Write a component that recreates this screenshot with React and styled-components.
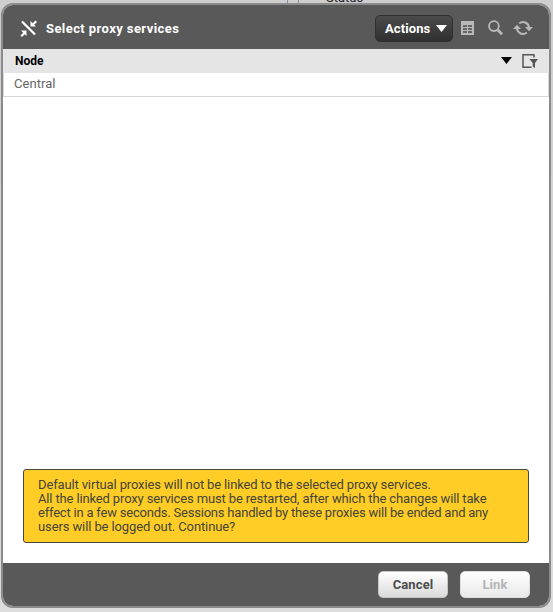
import React from "react";
import styled, { createGlobalStyle } from "styled-components";

const GlobalStyle = createGlobalStyle`
  * { box-sizing: border-box; }
  html, body { margin: 0; height: 100%; overflow: hidden; background: #d6d6d6; }
  body { font-family: Roboto, "Liberation Sans", sans-serif; font-size: 13px; }
`;

const Page = styled.div`
  position: relative;
  width: 553px;
  height: 612px;
  padding: 3px 2px 4px 1px;
  overflow: hidden;
  background: linear-gradient(#cecece, #dcdcdc);
`;

const Behind = styled.div`
  position: absolute;
  top: -10px;
  left: 287px;
  height: 15px;
  width: 90px;
  display: flex;
  line-height: 15px;
  color: #222;
`;

const Divider = styled.i`
  width: 1px;
  margin-right: 10px;
  background: #8095a8;
`;

const BehindLabel = styled.span`
  margin-left: 17px;
`;

const Dialog = styled.section`
  position: relative;
  display: flex;
  flex-direction: column;
  height: 605px;
  border: 2px solid #8b8b8b;
  border-radius: 12px;
  overflow: hidden;
  background: #fff;
`;

const Header = styled.header`
  display: flex;
  align-items: center;
  flex: 0 0 44px;
  padding: 2px 16px 0 17px;
  background: #595959;
  color: #b9b9b9;
`;

const Title = styled.h1`
  flex: 1;
  margin: 1px 0 0 9px;
  font-size: 13px;
  line-height: 18px;
  font-weight: 700;
  letter-spacing: 0.42px;
  color: #fff;
`;

const ActionsButton = styled.button`
  display: flex;
  align-items: center;
  justify-content: space-between;
  width: 78px;
  height: 27px;
  margin-right: 8px;
  padding: 0 5px 0 9px;
  border: 1px solid #303030;
  border-radius: 5px;
  background: linear-gradient(#4b4b4b, #303030);
  color: #fff;
  font: 700 13px Roboto, sans-serif;
  letter-spacing: 0.1px;
`;

const Icon = styled.svg`
  display: block;
  flex: none;
  margin-left: ${(p) => p.$gap || 0}px;
`;

const ColumnHead = styled.div`
  display: flex;
  align-items: center;
  flex: 0 0 24px;
  padding: 0 11px 0 12px;
  background: #e5e5e5;
  color: #000;
  font-size: 12px;
  font-weight: 700;
`;

const ColumnName = styled.span`
  flex: 1;
`;

const Row = styled.div`
  flex: 0 0 24px;
  padding-left: 10px;
  border: solid #d6d6d6;
  border-width: 0 1px 1px;
  line-height: 22px;
  letter-spacing: 0.05px;
  color: #666;
`;

const Content = styled.div`
  flex: 1;
  display: flex;
  align-items: flex-end;
  padding: 0 20px 20px;
`;

const Notice = styled.div`
  width: 506px;
  height: 74px;
  padding: 8px 0 0 14px;
  border: 1px solid #4a4639;
  border-radius: 3px;
  background: #ffcd26;
  color: #45443a;
  line-height: 14px;
`;

const NoticeLine = styled.div`
  white-space: nowrap;
  letter-spacing: ${(p) => p.$spacing}px;
`;

const Footer = styled.footer`
  display: flex;
  justify-content: flex-end;
  flex: 0 0 43px;
  gap: 12px;
  padding: 8px 19px 0 0;
  background: #595959;
`;

const Button = styled.button`
  width: 70px;
  height: 27px;
  padding: 0;
  border: 1px solid ${(p) => (p.disabled ? "#dedede" : "#c6c6c6")};
  border-radius: 5px;
  background: linear-gradient(#fff, ${(p) => (p.disabled ? "#e9e9e9" : "#dadada")});
  color: ${(p) => (p.disabled ? "#b5b5b5" : "#4c4c4c")};
  font: 700 13px Roboto, sans-serif;
  letter-spacing: 0.1px;
`;

const LinkIcon = () => (
  <Icon width="17" height="17" viewBox="0 0 17 17">
    <path d="M2 1.5 15 14.5" stroke="#fff" strokeWidth="2.3" />
    <path d="M10.5 1v5.5H16L14.2 4.7 17 2 15.5.5l-2.8 2.7zM1 10.5h5.5V16l-1.8-1.8L2 17 .5 15.5l2.7-2.8z" fill="#fff" />
  </Icon>
);

const TableIcon = () => (
  <Icon width="13" height="14" viewBox="0 0 13 14">
    <path d="M0 0h13v14H0z" fill="#b9b9b9" />
    <path d="M2 4h4v2H2zM7 4h4v2H7zM2 7h4v2H2zM7 7h4v2H7zM2 10h4v2H2zM7 10h4v2H7z" fill="#656565" />
  </Icon>
);

const SearchIcon = () => (
  <Icon $gap={14} width="16" height="16" viewBox="0 0 16 16" fill="none" stroke="#b9b9b9">
    <circle cx="5.9" cy="6.1" r="4.9" strokeWidth="1.8" />
    <path d="m9.6 9.8 4.4 4.4" strokeWidth="2.8" />
  </Icon>
);

const RefreshIcon = () => (
  <Icon $gap={9} width="20" height="16" viewBox="0 0 20 16">
    <path d="M6.2 3.4A6 6 0 0 1 16 7.5M13.8 12.6A6 6 0 0 1 4 8.5" fill="none" stroke="#b9b9b9" strokeWidth="2" />
    <path d="M12 7h8l-4 4.2zM0 9h8L4 4.8z" fill="#b9b9b9" />
  </Icon>
);

const Caret = () => (
  <Icon width="11" height="7" viewBox="0 0 11 7">
    <path d="M0 0h11L5.5 7z" fill="currentColor" />
  </Icon>
);

const HeadCaret = styled.span`
  padding-bottom: 2px;
`;

const FilterIcon = () => (
  <Icon $gap={10} width="16" height="14" viewBox="0 0 16 14">
    <path d="M12 3.5V.75H1V13.2h8.5" fill="none" stroke="#555" strokeWidth="1.5" />
    <path d="M7.5 5H16l-3 4v5l-2.3-1.6V9z" fill="#555" />
  </Icon>
);

const notice = [
  ["Default virtual proxies will not be linked to the selected proxy services.", -0.14],
  ["All the linked proxy services must be restarted, after which the changes will take", -0.14],
  ["effect in a few seconds. Sessions handled by these proxies will be ended and any", -0.21],
  ["users will be logged out. Continue?", -0.11],
];

export default function App() {
  return (
    <Page>
      <GlobalStyle />
      <Behind>
        <Divider />
        <Divider />
        <BehindLabel>Status</BehindLabel>
      </Behind>
      <Dialog>
        <Header>
          <LinkIcon />
          <Title>Select proxy services</Title>
          <ActionsButton>
            Actions
            <Caret />
          </ActionsButton>
          <TableIcon />
          <SearchIcon />
          <RefreshIcon />
        </Header>
        <ColumnHead>
          <ColumnName>Node</ColumnName>
          <HeadCaret>
            <Caret />
          </HeadCaret>
          <FilterIcon />
        </ColumnHead>
        <Row>Central</Row>
        <Content>
          <Notice>
            {notice.map(([text, spacing]) => (
              <NoticeLine key={text} $spacing={spacing}>{text}</NoticeLine>
            ))}
          </Notice>
        </Content>
        <Footer>
          <Button>Cancel</Button>
          <Button disabled>Link</Button>
        </Footer>
      </Dialog>
    </Page>
  );
}
